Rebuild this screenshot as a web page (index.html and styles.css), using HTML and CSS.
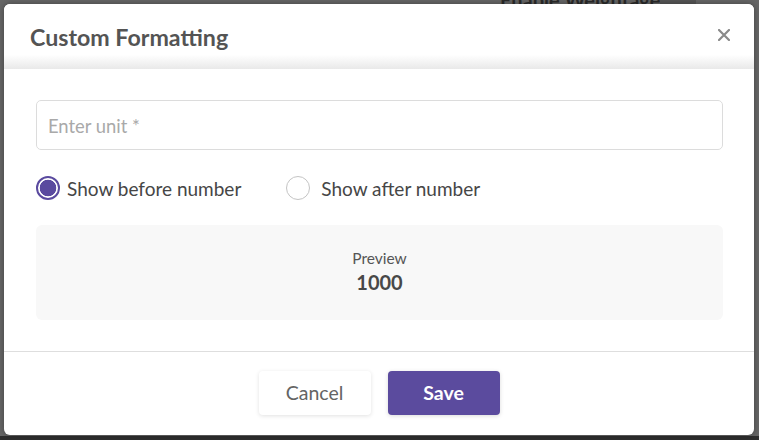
FILE: index.html
```html
<!DOCTYPE html>
<html>
<head>
<meta charset="utf-8">
<link rel="stylesheet" href="styles.css">
</head>
<body>
<div class="backdrop">
  <div class="behind">Enable Weightage</div>
  <div class="behind-box"></div>
  <div class="modal">
    <div class="modal-header">
      <h2 class="title">Custom Formatting</h2>
      <button class="close" aria-label="Close">
        <svg width="12" height="12" viewBox="0 0 12 12"><path d="M1 1L11 11M11 1L1 11" stroke="#8a8a8a" stroke-width="2.2" stroke-linecap="round"/></svg>
      </button>
    </div>
    <div class="modal-body">
      <div class="input">Enter unit *</div>
      <div class="radios">
        <label class="radio"><span class="dot checked"></span>Show before number</label>
        <label class="radio wide"><span class="dot"></span>Show after number</label>
      </div>
      <div class="preview">
        <div class="preview-label">Preview</div>
        <div class="preview-value">1000</div>
      </div>
    </div>
    <div class="modal-footer">
      <button class="btn cancel">Cancel</button>
      <button class="btn save">Save</button>
    </div>
  </div>
</div>
</body>
</html>
```
FILE: styles.css
```css
* { box-sizing: border-box; }
html, body { margin: 0; padding: 0; }
body {
  width: 759px;
  height: 440px;
  overflow: hidden;
  background: #2f2f2f;
  font-family: Lato, "Open Sans", sans-serif;
}
.backdrop {
  position: relative;
  width: 759px;
  height: 436px;
  background: #666666;
  padding: 4px 0 0 4px;
}
.behind {
  position: absolute;
  left: 500px;
  top: -12px;
  font-size: 20px;
  font-weight: 700;
  color: #2a2a2a;
}
.behind-box {
  position: absolute;
  left: 660px;
  top: 0;
  width: 36px;
  height: 6px;
  background: #555;
}
.modal {
  position: relative;
  width: 750px;
  height: 431px;
  background: #fff;
  border-radius: 6px;
  display: flex;
  flex-direction: column;
  overflow: hidden;
  box-shadow: 0 0 6px rgba(0,0,0,0.35);
}
.modal-header {
  height: 65px;
  display: flex;
  align-items: center;
  justify-content: space-between;
  padding: 0 23px 0 26px;
  background: linear-gradient(to bottom, #ffffff 0%, #ffffff 78%, #e9e9e9 100%);
}
.title {
  margin: 0;
  font-size: 23.2px;
  font-weight: 700;
  color: #545454;
}
.close {
  border: 0;
  background: none;
  padding: 0;
  width: 14px;
  height: 14px;
  display: flex;
  align-items: center;
  justify-content: center;
  margin-top: -3px;
}
.modal-body {
  flex: 1;
  padding: 31px 31px 0 32px;
  border-bottom: 1px solid #dedede;
}
.input {
  height: 50px;
  border: 1px solid #dcdcdc;
  border-radius: 5px;
  padding: 2px 11px 0;
  display: flex;
  align-items: center;
  font-size: 18.4px;
  color: #a9a9a9;
}
.radios {
  display: flex;
  gap: 45px;
  margin-top: 26px;
  height: 24px;
  align-items: center;
}
.radio {
  display: flex;
  align-items: center;
  font-size: 19px;
  color: #464646;
  gap: 7px;
}
.radio.wide { gap: 11px; }
.dot {
  width: 24px;
  height: 24px;
  border-radius: 50%;
  border: 1px solid #c4c4c4;
  background: #fff;
}
.dot.checked {
  border: 2px solid #5a4a9f;
  background: radial-gradient(circle, #5a4a9f 0, #5a4a9f 8px, #fff 8.6px);
}
.preview {
  margin-top: 25px;
  height: 95px;
  background: #f8f8f8;
  border-radius: 6px;
  display: flex;
  flex-direction: column;
  align-items: center;
  justify-content: center;
  padding-bottom: 3px;
}
.preview-label {
  font-size: 15.5px;
  color: #555;
  line-height: 20px;
  margin-bottom: 1px;
}
.preview-value {
  font-size: 20px;
  font-weight: 700;
  color: #484848;
  line-height: 26px;
}
.modal-footer {
  height: 83px;
  display: flex;
  justify-content: center;
  align-items: center;
  gap: 17px;
  padding-bottom: 2px;
}
.btn {
  width: 112px;
  height: 44px;
  border-radius: 4px;
  border: 0;
  font-family: Lato, "Open Sans", sans-serif;
  font-size: 19.5px;
}
.cancel {
  background: #fff;
  color: #646464;
  box-shadow: 0 1px 4px rgba(0,0,0,0.12);
}
.save {
  background: #5b4b9e;
  color: #fff;
  font-weight: 700;
  box-shadow: 0 1px 4px rgba(0,0,0,0.15);
}
```
